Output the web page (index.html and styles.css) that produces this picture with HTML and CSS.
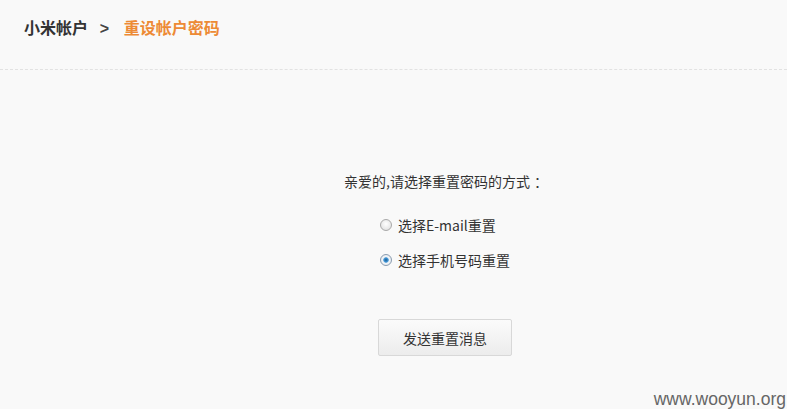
FILE: index.html
```html
<!DOCTYPE html>
<html lang="zh-CN">

<head>
    <meta charset="UTF-8">
    <meta name="viewport" content="width=device-width, initial-scale=1.0">
    <title>重设帐户密码</title>
    <link rel="stylesheet" href="styles.css">
</head>

<body>
    <div class="header">
        <span class="brand">小米帐户</span>
        <span class="sep">&gt;</span>
        <span class="page-title">重设帐户密码</span>
    </div>

    <div class="main">
        <div class="box">
            <p class="tip">亲爱的,请选择重置密码的方式<span class="colon">：</span></p>
            <div class="options">
                <label class="opt"><input type="radio" name="way" value="email"> 选择E-mail重置</label>
                <label class="opt"><input type="radio" name="way" value="phone" checked> 选择手机号码重置</label>
            </div>
            <button class="btn" type="button">发送重置消息</button>
        </div>
    </div>

    <div class="watermark">www.wooyun.org</div>
</body>

</html>
```

FILE: styles.css
```css
html,
body {
    margin: 0;
    padding: 0;
    height: 100%;
}

body {
    background: #f9f9f9;
    font-family: "Noto Sans CJK SC", "Liberation Sans", sans-serif;
    color: #333;
    position: relative;
    overflow: hidden;
}

.header {
    height: 70px;
    box-sizing: border-box;
    padding: 16px 0 0 24px;
    border-bottom: 1px dashed #e2e2e2;
    font-size: 16px;
    line-height: 22px;
    font-weight: bold;
}

.brand {
    color: #333;
}

.sep {
    margin: 0 11px 0 8px;
    font-family: "Liberation Sans", sans-serif;
    color: #444;
}

.page-title {
    color: #ed8a35;
}

.main {
    padding-top: 101px;
    padding-left: 344px;
}

.box {
    width: 220px;
    font-size: 14px;
}

.tip {
    margin: 0;
    line-height: 20px;
    white-space: nowrap;
}

.colon {
    padding-left: 4px;
}

.options {
    margin-top: 24px;
    padding-left: 36px;
}

.opt {
    display: flex;
    align-items: center;
    height: 20px;
    margin-bottom: 15px;
    line-height: 20px;
}

.opt input {
    appearance: none;
    -webkit-appearance: none;
    width: 12px;
    height: 12px;
    margin: 0 6px 0 0;
    border-radius: 50%;
    border: 1px solid #a9a9a9;
    background: radial-gradient(circle at 50% 40%, #ffffff 0, #e6e6e6 70%, #d4d4d4 100%);
    box-sizing: border-box;
}

.opt input:checked {
    border-color: #8a9cb0;
    background: radial-gradient(circle, #1c5d8f 0, #3b8fd0 26%, #5aa3dc 34%, #f4f6f8 44%, #dde3ea 100%);
}

.btn {
    display: block;
    margin: 49px 0 0 34px;
    width: 134px;
    height: 37px;
    border: 1px solid #d8d8d8;
    border-radius: 2px;
    background: linear-gradient(#fbfbfb, #ececec);
    font-family: inherit;
    font-size: 14px;
    color: #333;
}

.watermark {
    position: absolute;
    right: 1px;
    bottom: -1px;
    font-family: "Liberation Sans", sans-serif;
    font-size: 17.5px;
    color: #666;
    line-height: 22px;
}
```
